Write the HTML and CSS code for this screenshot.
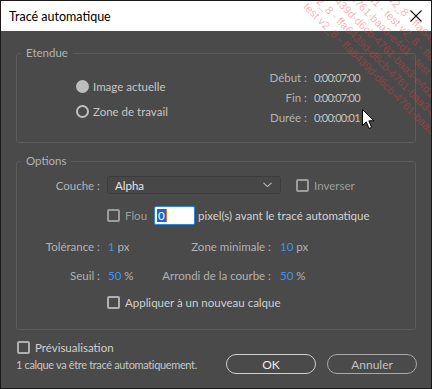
FILE: index.html
```html
<!DOCTYPE html>
<html lang="fr">
<head>
    <meta charset="UTF-8">
    <meta name="viewport" content="width=device-width, initial-scale=1.0">
    <title>Tracé automatique</title>
    <link rel="stylesheet" href="styles.css">
</head>
<body>

    <div class="window">
        <div class="titlebar">
            <span class="title">Tracé automatique</span>
            <svg class="close" width="12" height="12" viewBox="0 0 12 12">
                <path d="M0.5 0.5 L11.5 11.5 M11.5 0.5 L0.5 11.5" stroke="#111" stroke-width="1.1" fill="none"/>
            </svg>
        </div>

        <div class="main">
            <fieldset class="group etendue">
                <legend>Etendue</legend>
                <div class="etendue-body">
                    <div class="radios">
                        <label class="radio-row"><span class="radio filled"></span>Image actuelle</label>
                        <label class="radio-row"><span class="radio"></span>Zone de travail</label>
                    </div>
                    <div class="times">
                        <span class="tlabel">Début :</span><span class="tvalue">0:00:07:00</span>
                        <span class="tlabel">Fin :</span><span class="tvalue">0:00:07:00</span>
                        <span class="tlabel">Durée :</span><span class="tvalue">0:00:00:01</span>
                    </div>
                </div>
            </fieldset>

            <fieldset class="group options">
                <legend>Options</legend>
                <div class="options-body">
                    <div class="row row-couche">
                        <span class="label">Couche :</span>
                        <div class="select">
                            <span>Alpha</span>
                            <svg width="9" height="6" viewBox="0 0 9 6">
                                <path d="M0.5 0.8 L4.5 4.6 L8.5 0.8" stroke="#bdbdbd" stroke-width="1.1" fill="none"/>
                            </svg>
                        </div>
                        <label class="check dim inverser"><span class="box"></span>Inverser</label>
                    </div>

                    <div class="row row-flou">
                        <label class="check dim"><span class="box"></span>Flou</label>
                        <div class="field"><span class="sel">0</span><span class="caret"></span></div>
                        <span class="text">pixel(s) avant le tracé automatique</span>
                    </div>

                    <div class="row row-values">
                        <span class="label">Tolérance :</span>
                        <span class="val"><b>1</b> px</span>
                        <span class="label2">Zone minimale :</span>
                        <span class="val2"><b>10</b> px</span>
                    </div>

                    <div class="row row-values">
                        <span class="label">Seuil :</span>
                        <span class="val"><b>50</b> %</span>
                        <span class="label2">Arrondi de la courbe :</span>
                        <span class="val2"><b>50</b> %</span>
                    </div>

                    <div class="row row-apply">
                        <label class="check"><span class="box"></span>Appliquer à un nouveau calque</label>
                    </div>
                </div>
            </fieldset>

            <label class="check preview"><span class="box"></span>Prévisualisation</label>

            <div class="footer">
                <span class="status">1 calque va être tracé automatiquement.</span>
                <div class="buttons">
                    <button class="btn ok">OK</button>
                    <button class="btn cancel">Annuler</button>
                </div>
            </div>
        </div>

        <svg class="cursor" width="13" height="21" viewBox="0 0 13 21">
            <path d="M0.5 0.5 L0.5 16.5 L4.3 12.8 L7 19.5 L9.6 18.4 L6.9 11.8 L12 11.8 Z" fill="#fff" stroke="#000" stroke-width="1"/>
        </svg>

        <div class="watermark">
            <span class="wm-line">e4d1 - test v2_8 - ffa6439d-d6cb-4761-baa3-e4d1 - test v2_8</span>
            <span class="wm-line">baa3-e4d1 - test v2_8 - ffa6439d-d6cb-4761-baa3-e4d1</span>
            <span class="wm-line">d6cb-4761-baa3-e4d1 - test v2_8 - ffa6439d-d6cb</span>
            <span class="wm-line">ffa6439d-d6cb-4761-baa3-e4d1 - test v2_8 - ffa6439d</span>
            <span class="wm-line">v2_8 - ffa6439d-d6cb-4761-baa3-e4d1 - test v2_8</span>
            <span class="wm-line">test v2_8 - ffa6439d-d6cb-4761-baa3-e4d1 - test v2_8</span>
        </div>
    </div>

</body>
</html>
```

FILE: styles.css
```css
body {
    margin: 0;
    font-family: Lato, "Noto Sans", sans-serif;
    font-size: 11.5px;
    background: #ffffff;
}
.window {
    position: relative;
    width: 430px;
    height: 387px;
    border: 1px solid #1a1a1a;
    background: #4a4a4a;
    overflow: hidden;
    white-space: nowrap;
}
.titlebar {
    height: 30px;
    background: #ffffff;
    display: flex;
    align-items: center;
    justify-content: space-between;
    padding: 0 9px 0 8px;
}
.title {
    font-size: 12.5px;
    color: #000;
}
.close {
    margin-top: -1px;
}
.main {
    padding: 0 15px;
    display: flex;
    flex-direction: column;
}
.group {
    margin: 0;
    padding: 0;
    border: 1px solid #5c5c5c;
    border-radius: 3px;
    min-width: 0;
}
.group legend {
    margin-left: 4px;
    padding: 0 5px;
    line-height: 14px;
    color: #b2b2b2;
}
.etendue {
    margin-top: 15px;
}
.etendue-body {
    display: flex;
    padding: 7px 54px 15px 59px;
}
.radios {
    display: flex;
    flex-direction: column;
    padding-top: 7px;
}
.radio-row {
    display: flex;
    align-items: center;
    gap: 4px;
    height: 25px;
    color: #c6c6c6;
}
.radio {
    width: 9px;
    height: 9px;
    border: 2px solid #c0c0c0;
    border-radius: 50%;
}
.radio.filled {
    background: #bdbdbd;
    border-color: #bdbdbd;
}
.times {
    margin-left: auto;
    display: grid;
    grid-template-columns: 50px 47px;
    grid-auto-rows: 20px;
    column-gap: 7px;
    align-items: center;
}
.tlabel {
    text-align: right;
    color: #b2b2b2;
}
.tvalue {
    font-size: 11px;
    letter-spacing: -0.7px;
    color: #c4c4c4;
}
.options {
    margin-top: 11px;
}
.options-body {
    padding: 8px 0 19px 0;
}
.row {
    display: flex;
    align-items: center;
}
.label {
    width: 83px;
    text-align: right;
    color: #b2b2b2;
}
.row-couche {
    height: 18px;
}
.select {
    width: 164px;
    height: 16px;
    margin-left: 7px;
    border: 1px solid #3c3c3c;
    border-radius: 3px;
    background: #474747;
    display: flex;
    align-items: center;
    justify-content: space-between;
    padding: 0 8px 0 0;
    box-sizing: content-box;
}
.select span {
    padding-left: 7px;
    color: #e6e6e6;
}
.check {
    display: flex;
    align-items: center;
    gap: 5px;
    color: #cfcfcf;
}
.box {
    width: 9px;
    height: 9px;
    border: 2px solid #b0b0b0;
    border-radius: 2px;
}
.check.dim {
    color: #9c9c9c;
}
.check.dim .box {
    border-color: #9c9c9c;
}
.inverser {
    margin-left: 15px;
}
.row-flou {
    height: 19px;
    margin-top: 12px;
    padding-left: 90px;
}
.field {
    width: 37px;
    height: 17px;
    margin-left: 7px;
    border: 1px solid #2d84e0;
    border-radius: 2px;
    background: #ffffff;
    display: flex;
    align-items: center;
    padding-left: 2px;
    box-sizing: content-box;
}
.sel {
    background: #1665d0;
    color: #fff;
    line-height: 13px;
    padding: 0 1px;
}
.caret {
    width: 1px;
    height: 13px;
    background: #e07020;
}
.text {
    margin-left: 3px;
    color: #d2d2d2;
}
.row-values {
    height: 16px;
    margin-top: 13px;
}
.val {
    width: 42px;
    padding-left: 8px;
    box-sizing: border-box;
    color: #b2b2b2;
}
.label2 {
    width: 129px;
    text-align: right;
    color: #b2b2b2;
}
.val2 {
    padding-left: 9px;
    color: #b2b2b2;
}
.val b,
.val2 b {
    font-weight: normal;
    color: #3b93ee;
}
.row-apply {
    height: 16px;
    margin-top: 11px;
    padding-left: 90px;
}
.preview {
    margin-top: 11px;
    height: 13px;
    padding-left: 1px;
}
.footer {
    display: flex;
    align-items: center;
    justify-content: space-between;
    height: 20px;
}
.status {
    font-size: 11px;
    letter-spacing: -0.35px;
    color: #c6c6c6;
}
.buttons {
    display: flex;
    gap: 11px;
    margin-right: -1px;
}
.btn {
    width: 90px;
    height: 20px;
    border-radius: 10px;
    background: transparent;
    font-family: inherit;
    font-size: 12px;
    padding: 0;
}
.btn.ok {
    border: 1px solid #d0d0d0;
    color: #ececec;
}
.btn.cancel {
    border: 1px solid #a8a8a8;
    color: #c0c0c0;
}
.cursor {
    position: absolute;
    left: 361px;
    top: 108px;
}
.watermark {
    position: absolute;
    left: 354px;
    top: -46px;
    width: 300px;
    height: 200px;
    transform: rotate(45deg);
    transform-origin: 0 0;
    display: flex;
    flex-direction: column;
    gap: 2px;
    pointer-events: none;
}
.wm-line {
    font-family: "Liberation Sans", sans-serif;
    font-size: 11px;
    line-height: 11px;
    white-space: nowrap;
    color: rgba(235, 60, 70, 0.4);
}
```
